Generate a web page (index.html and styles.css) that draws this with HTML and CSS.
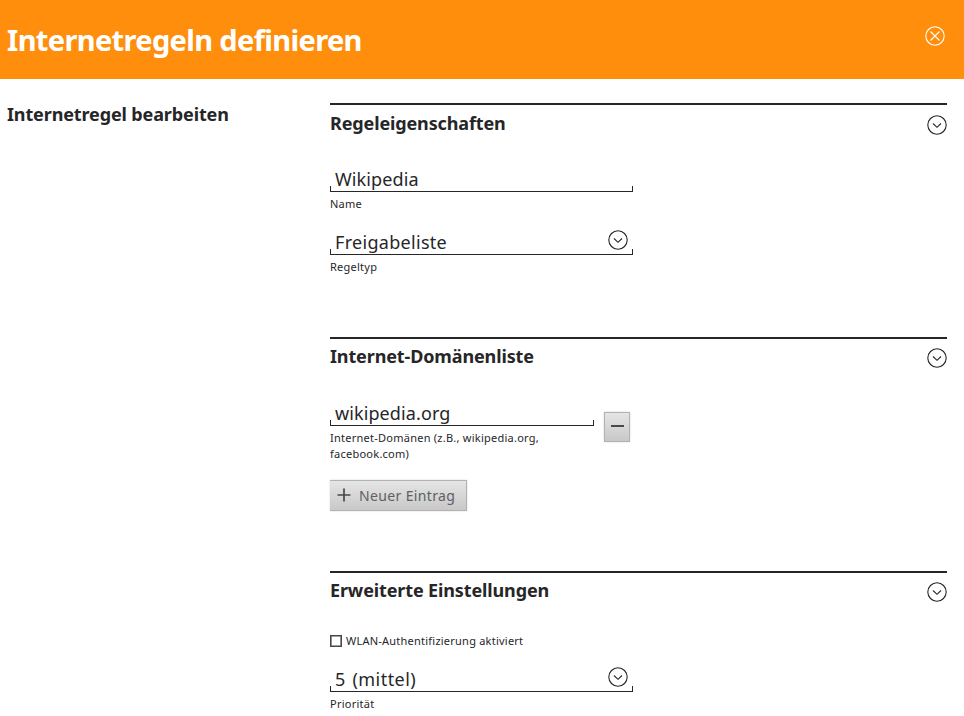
FILE: index.html
```html
<!DOCTYPE html>
<html lang="de">
<head>
<meta charset="utf-8">
<title>Internetregeln definieren</title>
<link rel="stylesheet" href="styles.css">
</head>
<body>
<svg class="symbols" aria-hidden="true">
  <symbol id="chevron" viewBox="0 0 20 20"><circle cx="10" cy="10" r="9.2"/><path d="M6 8.5 10 12.3 14 8.5"/></symbol>
  <symbol id="close" viewBox="0 0 20 20"><circle cx="10" cy="10" r="9.2"/><path d="M5.5 5.5 14.5 14.5M14.5 5.5 5.5 14.5"/></symbol>
</svg>
<header class="bar">
  <h1>Internetregeln definieren</h1>
  <svg class="icon close"><use href="#close"/></svg>
</header>
<main class="page">
  <h2 class="side">Internetregel bearbeiten</h2>
  <div class="sections">
    <section class="first">
      <div class="head"><h2>Regeleigenschaften</h2><svg class="icon"><use href="#chevron"/></svg></div>
      <div class="field"><div class="value"><span>Wikipedia</span></div><div class="label">Name</div></div>
      <div class="field"><div class="value"><span class="v-type">Freigabeliste</span><svg class="icon"><use href="#chevron"/></svg></div><div class="label">Regeltyp</div></div>
    </section>
    <section>
      <div class="head"><h2>Internet-Domänenliste</h2><svg class="icon"><use href="#chevron"/></svg></div>
      <div class="entry">
        <div class="field narrow"><div class="value"><span>wikipedia.org</span></div><div class="label">Internet-Domänen (z.B., wikipedia.org,<br>facebook.com)</div></div>
        <button class="remove" aria-label="Entfernen"><svg viewBox="0 0 13 2"><path d="M0 1H13"/></svg></button>
      </div>
      <button class="add"><svg viewBox="0 0 14 14"><path d="M0.5 7H13.5M7 0.5V13.5"/></svg><span>Neuer Eintrag</span></button>
    </section>
    <section class="last">
      <div class="head"><h2>Erweiterte Einstellungen</h2><svg class="icon"><use href="#chevron"/></svg></div>
      <div class="check"><svg class="box" viewBox="0 0 12 12"><path d="M.8 .8H11.2V11.2H.8Z"/></svg><span>WLAN-Authentifizierung aktiviert</span></div>
      <div class="field"><div class="value"><span class="v-prio">5 (mittel)</span><svg class="icon"><use href="#chevron"/></svg></div><div class="label">Priorität</div></div>
    </section>
  </div>
</main>
</body>
</html>
```
FILE: styles.css
```css
* { box-sizing: border-box; }
body { margin: 0; background: #fff; color: #262628; font-family: "Noto Sans", sans-serif; }
h1, h2 { margin: 0; font-weight: 700; white-space: nowrap; }
.symbols { display: none; }
.icon { width: 20px; height: 20px; flex: none; fill: none; stroke: #262628; stroke-width: 1.1; }
.bar { height: 79px; padding: 19px 19px 0 7px; background: #ff8e0d; display: flex; justify-content: space-between; }
h1 { font-size: 29px; line-height: 42px; letter-spacing: -0.65px; color: #fff; }
.icon.close { stroke: #fff; margin-top: 7px; }
.page { display: flex; padding: 24px 17px 0 7px; }
.side { width: 323px; flex: none; margin-top: -1px; }
h2 { font-size: 18px; line-height: 24px; letter-spacing: -0.13px; }
.sections { width: 617px; }
section { height: 234px; border-top: 2px solid #262628; }
section.last { height: auto; }
.head { height: 63px; padding-top: 5px; display: flex; justify-content: space-between; }
.first .head { padding-top: 6px; }
.head .icon { margin-top: 4px; }
.field { width: 303px; height: 63px; }
.last .field { height: auto; }
.field.narrow { width: 264px; }
.value {
  height: 24px; padding: 0 5px; display: flex; justify-content: space-between;
  font-size: 18px; line-height: 22px; letter-spacing: 0.1px; white-space: nowrap;
  background:
    linear-gradient(#262628, #262628) 0 100% / 100% 1px no-repeat,
    linear-gradient(#262628, #262628) 0 100% / 1px 6px no-repeat,
    linear-gradient(#262628, #262628) 100% 100% / 1px 6px no-repeat;
}
.value .icon { margin-top: -1px; }
.v-type { letter-spacing: 0.3px; }
.v-prio { letter-spacing: 0.45px; word-spacing: 1.6px; }
.label { font-size: 11px; line-height: 16px; letter-spacing: 0.25px; padding-top: 4px; white-space: nowrap; }
.entry { display: flex; gap: 10px; height: 78px; }
button { font-family: inherit; margin: 0; border: 1px solid #b2b2b2; background: linear-gradient(#e5e5e5, #c8c8c8); box-shadow: 0 0 2px rgba(0,0,0,.15); }
button svg { fill: none; stroke: #48484a; }
.remove { width: 26px; height: 30px; margin-top: 10px; padding: 0; display: flex; align-items: center; justify-content: center; }
.remove svg { width: 13px; height: 2px; stroke-width: 2; margin-bottom: 2px; }
.add { display: flex; align-items: center; width: 137px; height: 31px; border-left: 0; padding: 0 0 0 7px; color: #606062; font-size: 14px; line-height: 20px; letter-spacing: 0.36px; white-space: nowrap; }
.add svg { width: 14px; height: 14px; margin: 0 8px 2px 0; stroke-width: 1.7; }
.check { height: 35px; margin-top: -3px; display: flex; gap: 4px; font-size: 11px; line-height: 16px; letter-spacing: 0.23px; white-space: nowrap; }
.box { width: 12px; height: 12px; margin-top: 2px; fill: none; stroke: #48484a; stroke-width: 1.6; }
```
